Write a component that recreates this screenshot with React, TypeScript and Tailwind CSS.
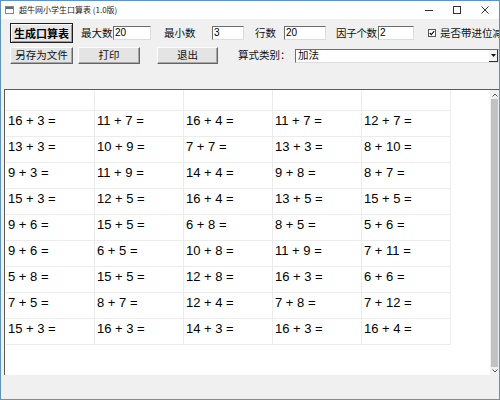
import React from 'react'

const ROWS: string[][] = [
  ['16 + 3 =', '11 + 7 =', '16 + 4 =', '11 + 7 =', '12 + 7 ='],
  ['13 + 3 =', '10 + 9 =', '7 + 7 =', '13 + 3 =', '8 + 10 ='],
  ['9 + 3 =', '11 + 9 =', '14 + 4 =', '9 + 8 =', '8 + 7 ='],
  ['15 + 3 =', '12 + 5 =', '16 + 4 =', '13 + 5 =', '15 + 5 ='],
  ['9 + 6 =', '15 + 5 =', '6 + 8 =', '8 + 5 =', '5 + 6 ='],
  ['9 + 6 =', '6 + 5 =', '10 + 8 =', '11 + 9 =', '7 + 11 ='],
  ['5 + 8 =', '15 + 5 =', '12 + 8 =', '16 + 3 =', '6 + 6 ='],
  ['7 + 5 =', '8 + 7 =', '12 + 4 =', '7 + 8 =', '7 + 12 ='],
  ['15 + 3 =', '16 + 3 =', '14 + 3 =', '16 + 3 =', '16 + 4 ='],
]

const cjk = "font-['Microsoft_YaHei','Noto_Sans_CJK_SC',sans-serif]"

function Field({ value, w }: { value: string; w: string }) {
  return (
    <div className={`${w} shrink-0 h-[14px] bg-white border border-t-[#6d6d6d] border-l-[#6d6d6d] border-r-[#dcdcdc] border-b-[#dcdcdc] flex items-center pl-[1px] text-[10px] leading-none text-black font-['Liberation_Sans',sans-serif]`}>
      {value}
    </div>
  )
}

function Btn({ label, w }: { label: string; w: string }) {
  return (
    <button className={`${w} shrink-0 h-[17px] bg-[#e4e4e4] border border-t-[#fdfdfd] border-l-[#fdfdfd] border-r-[#646464] border-b-[#646464] shadow-[inset_-1px_-1px_0_#a8a8a8] flex items-center justify-center text-[10.5px] leading-none text-[#111] ${cjk}`}>
      {label}
    </button>
  )
}

function Label({ text, cls }: { text: string; cls: string }) {
  return <span className={`${cls} shrink-0 whitespace-nowrap leading-none`}>{text}</span>
}

export default function App() {
  return (
    <div className={`w-[500px] h-[400px] border border-[#5f93b9] bg-[#f0f0f0] flex flex-col overflow-hidden ${cjk}`}>
      {/* Title bar */}
      <div className="h-[18px] bg-white flex items-center shrink-0">
        <div className="ml-[4px] w-[9px] h-[8px] border border-[#8a8a8a] bg-white flex flex-col">
          <div className="h-[2px] bg-[#5a6a7a]" />
        </div>
        <span className="ml-[5px] text-[8px] leading-none text-[#222]">超牛网小学生口算表 (1.0版)</span>
        <div className="ml-auto flex h-full">
          <div className="w-[28px] h-full flex items-center justify-center">
            <svg width="8" height="8" viewBox="0 0 8 8"><path d="M0 4.5h8" stroke="#333" strokeWidth="1" /></svg>
          </div>
          <div className="w-[28px] h-full flex items-center justify-center">
            <svg width="8" height="8" viewBox="0 0 8 8"><rect x="0.5" y="0.5" width="7" height="7" fill="none" stroke="#333" strokeWidth="1" /></svg>
          </div>
          <div className="w-[28px] h-full flex items-center justify-center">
            <svg width="8" height="8" viewBox="0 0 8 8"><path d="M0.5 0.5l7 7M7.5 0.5l-7 7" stroke="#333" strokeWidth="1" /></svg>
          </div>
        </div>
      </div>

      {/* Toolbar */}
      <div className="h-[70px] shrink-0 pt-[4px] flex flex-col gap-[4px] text-[10.5px] text-[#111]">
        <div className="flex items-center h-[20px] pl-[9px]">
          <button className={`w-[63px] shrink-0 h-[20px] bg-[#e6e6e6] border border-[#1e1e1e] shadow-[inset_1px_1px_0_#fff,inset_-1px_-1px_0_#9a9a9a] flex items-center justify-center text-[11px] font-bold leading-none text-black ${cjk}`}>
            生成口算表
          </button>
          <Label text="最大数" cls="ml-[8px] w-[32px]" />
          <Field value="20" w="w-[38px]" />
          <Label text="最小数" cls="ml-[13px] w-[48px]" />
          <Field value="3" w="w-[32px]" />
          <Label text="行数" cls="ml-[11px] w-[29px]" />
          <Field value="20" w="w-[42px]" />
          <Label text="因子个数" cls="ml-[10px] w-[42px] tracking-[-0.3px]" />
          <Field value="2" w="w-[36px]" />
          <div className="ml-[14px] shrink-0 w-[8px] h-[8px] bg-white border border-[#555] flex items-center justify-center">
            <svg width="6" height="6" viewBox="0 0 6 6"><path d="M0.8 3l1.5 1.6L5.2 1.2" fill="none" stroke="#111" strokeWidth="1.2" /></svg>
          </div>
          <Label text="是否带进位减" cls="ml-[4px]" />
        </div>
        <div className="flex items-center h-[17px] pl-[9px]">
          <Btn label="另存为文件" w="w-[63px]" />
          <div className="ml-[5px] shrink-0"><Btn label="打印" w="w-[62px]" /></div>
          <div className="ml-[17px] shrink-0"><Btn label="退出" w="w-[61px]" /></div>
          <Label text="算式类别：" cls="ml-[20px] w-[57px]" />
          <div className="w-[204px] shrink-0 h-[14px] bg-white border border-t-[#6d6d6d] border-l-[#6d6d6d] border-r-[#dcdcdc] border-b-[#dcdcdc] flex items-center">
            <span className="pl-[2px] text-[10.5px] leading-none">加法</span>
            <div className="ml-auto w-[9px] h-full bg-[#f4f4f4] border-r border-b border-[#333] flex items-center justify-center">
              <svg width="5" height="3" viewBox="0 0 5 3"><path d="M0 0h5L2.5 3z" fill="#111" /></svg>
            </div>
          </div>
        </div>
      </div>

      {/* Sheet area */}
      <div className="h-[286px] shrink-0 ml-[3px] flex bg-white border-t border-l border-[#5c5c5c]">
        <div className="flex-1 pl-[1px] overflow-hidden">
          <div className="flex">
            {[0, 1, 2, 3, 4].map(c => (
              <div key={c} className="w-[89px] shrink-0 h-[21px] border-r border-b border-[#ececec]" />
            ))}
          </div>
          {ROWS.map((row, r) => (
            <div key={r} className="flex">
              {row.map((cell, c) => (
                <div key={c} className="w-[89px] shrink-0 h-[26px] border-r border-b border-[#ececec] pl-[2px] pt-[2px] text-[13px] leading-[15px] text-black font-['Liberation_Sans',Arial,sans-serif] whitespace-nowrap">
                  {cell}
                </div>
              ))}
            </div>
          ))}
        </div>
        <div className="w-[9px] bg-[#f0f0f0] flex flex-col items-center pt-[3px] pb-[2px]">
          <svg width="6" height="4" viewBox="0 0 6 4"><path d="M0.5 3.5L3 1l2.5 2.5" fill="none" stroke="#555" strokeWidth="1" /></svg>
          <div className="mt-[2px] w-[7px] flex-1 bg-[#c2c2c2]" />
          <svg className="mt-[2px]" width="6" height="4" viewBox="0 0 6 4"><path d="M0.5 0.5L3 3l2.5-2.5" fill="none" stroke="#555" strokeWidth="1" /></svg>
        </div>
      </div>

      <div className="flex-1 bg-[#f0f0f0]" />
    </div>
  )
}
